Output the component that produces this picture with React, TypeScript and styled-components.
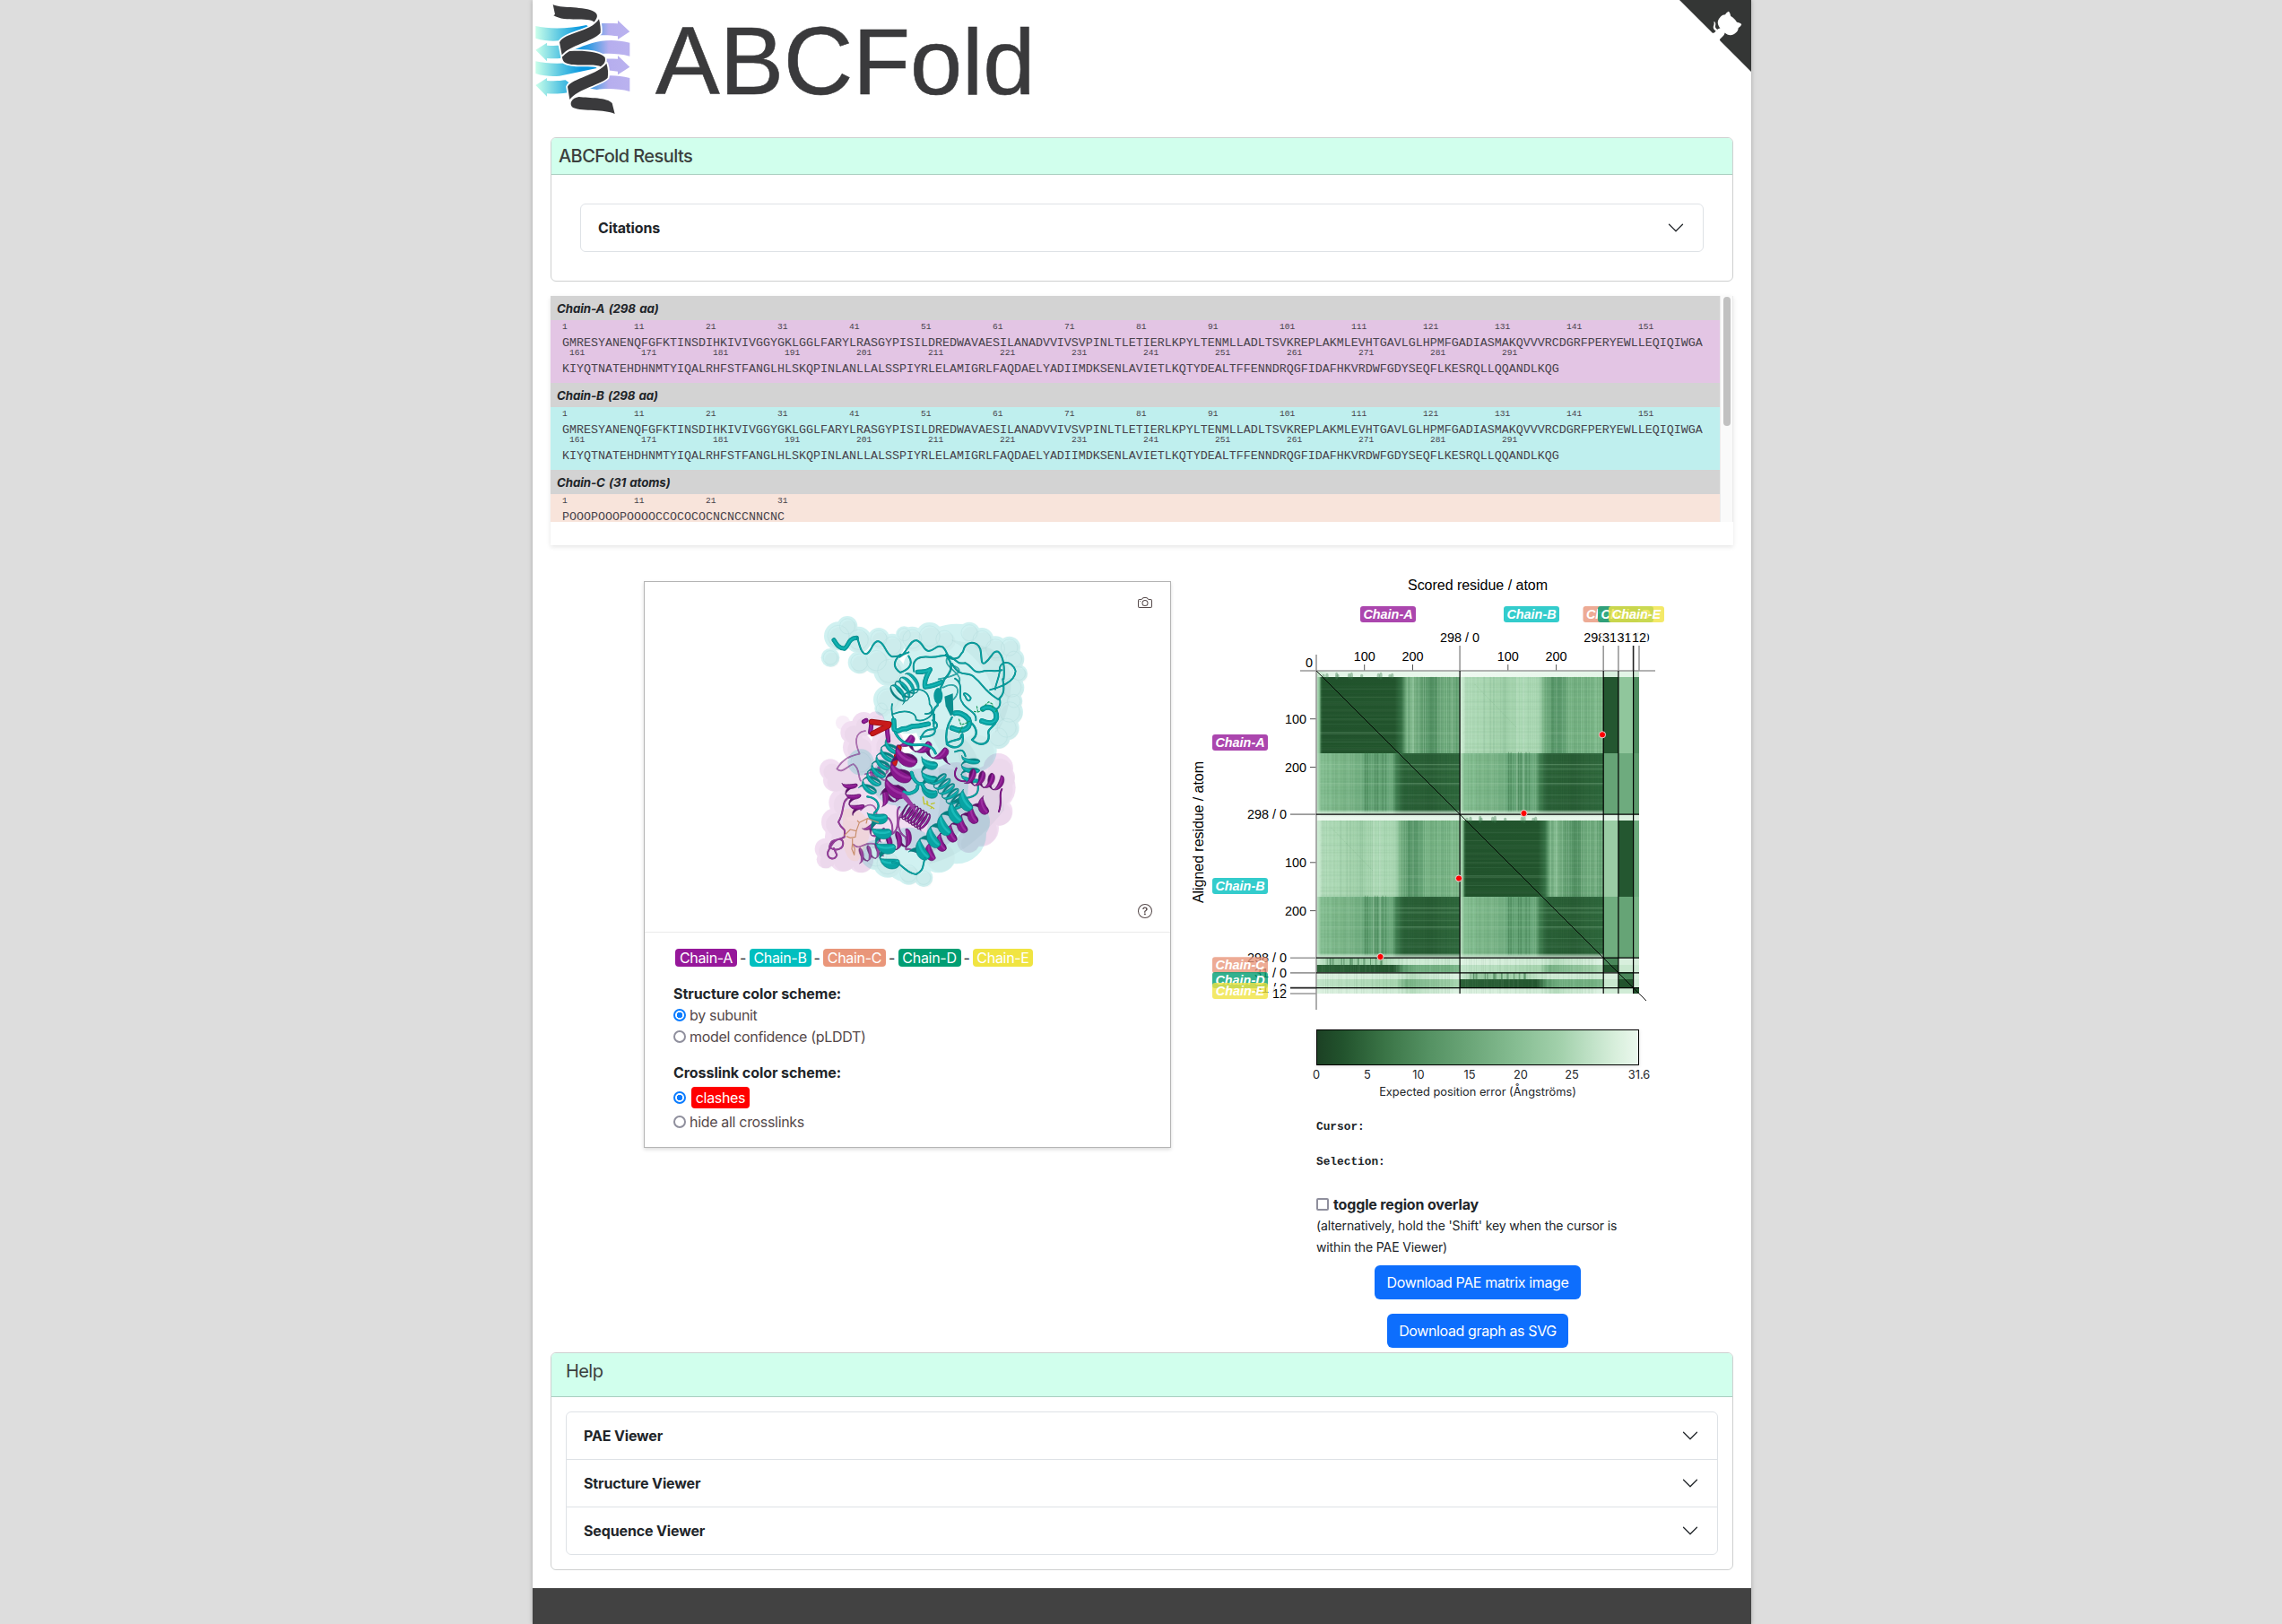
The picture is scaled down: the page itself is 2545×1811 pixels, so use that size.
import React from "react";
import styled, { createGlobalStyle } from "styled-components";
import { BsCamera, BsQuestionCircle, BsChevronDown } from "react-icons/bs";

const SANS = `Inter, "Liberation Sans", sans-serif`;
const ARIAL = `"Liberation Sans", Arial, sans-serif`;
const MONO = `"Liberation Mono", monospace`;

const Global = createGlobalStyle`
  *, *::before, *::after { box-sizing: border-box; }
  body { margin: 0; background: #ddd; color: #212529; font-family: ${SANS}; font-size: 16px; line-height: 24px; }
`;

/* ---------- page frame ---------- */

const Page = styled.main`
  position: relative;
  width: 1359px;
  height: 1811px;
  margin: 0 auto;
  left: 1px;
  background: #fff;
  box-shadow: 0 0 5px rgba(0, 0, 0, 0.25);
  display: flex;
  flex-direction: column;
  overflow: hidden;
`;
const Header = styled.header`
  height: 153px;
  display: flex;
  align-items: flex-start;
`;
const Wordmark = styled.h1`
  margin: 0 0 0 17px;
  font: 400 104.5px/137px ${ARIAL};
  color: #3a3a3c;
  display: flex;
  align-items: baseline;
  white-space: nowrap;
  -webkit-text-stroke: 0.6px #3a3a3c;
`;
const WordmarkLead = styled.span`
  font-size: 107.5px;
  letter-spacing: -0.3px;
`;
const Corner = styled.svg`
  position: absolute;
  top: 0;
  right: 0;
  width: 80px;
  height: 80px;
  fill: #343635;
  color: #fff;
`;
const Body = styled.div`
  padding: 0 20px;
  flex: 1;
  display: flex;
  flex-direction: column;
`;
const Footer = styled.footer`
  height: 40px;
  background: #424242;
`;

/* ---------- cards & accordions ---------- */

const Card = styled.section<{ $h: number }>`
  height: ${(p) => p.$h}px;
  flex: none;
  border: 1px solid #ced0d0;
  border-radius: 6px;
  background: #fff;
  overflow: hidden;
`;
const CardHeader = styled.h2<{ $h: number; $x: number; $weight: number }>`
  margin: 0;
  height: ${(p) => p.$h}px;
  padding: 8px ${(p) => p.$x}px;
  font-size: 20px;
  line-height: 24px;
  font-weight: ${(p) => p.$weight};
  letter-spacing: -0.58px;
  color: #3b3f3d;
  background: #d1ffed;
  border-bottom: 1px solid #a9cfc0;
`;
const Accordion = styled.div<{ $my: number; $mx: number }>`
  margin: ${(p) => p.$my}px ${(p) => p.$mx}px;
  border: 1px solid #dee2e6;
  border-radius: 6px;
`;
const AccordionItem = styled.button`
  all: unset;
  box-sizing: border-box;
  width: 100%;
  height: 52px;
  padding: 0 20px 0 19px;
  display: flex;
  align-items: center;
  justify-content: space-between;
  font: 650 16px/24px ${SANS};
  letter-spacing: -0.14px;
  color: #212529;
  & + & {
    height: 53px;
    border-top: 1px solid #dee2e6;
  }
  svg {
    width: 20px;
    height: 20px;
  }
`;

/* ---------- sequence panel ---------- */

const SequencePanel = styled.section`
  margin-top: 16px;
  height: 278px;
  flex: none;
  box-shadow: 0 2px 5px rgba(0, 0, 0, 0.1);
`;
const SequenceScroll = styled.div`
  height: 252px;
  display: flex;
  overflow: hidden;
`;
const SequenceList = styled.div`
  flex: 1;
  min-width: 0;
`;
const ScrollTrack = styled.div`
  width: 15px;
  background: #fafafa;
  border-left: 1px solid #ececec;
  border-right: 1px solid #ececec;
  padding: 1px 3px;
`;
const ScrollThumb = styled.div`
  width: 8px;
  height: 144px;
  border-radius: 4px;
  background: #c1c1c1;
`;
const ChainTitle = styled.h3`
  margin: 0;
  height: 27px;
  padding: 0 7px;
  background: #d3d3d3;
  font: italic 700 13.3px/29px ${SANS};
  letter-spacing: -0.1px;
  word-spacing: 1.2px;
`;
const ChainBody = styled.div<{ $bg: string }>`
  height: 70px;
  padding: 1px 0 0 13px;
  background: ${(p) => p.$bg};
  font-family: ${MONO};
  color: #48434b;
`;
const SeqLine = styled.div`
  height: 28.5px;
`;
const Ruler = styled.div<{ $shift: number }>`
  display: flex;
  padding-left: ${(p) => p.$shift}px;
  height: 12px;
  font-size: 9.6px;
  line-height: 14px;
  span {
    width: 80px;
  }
`;
const Letters = styled.div`
  font-size: 13.333px;
  line-height: 25px;
  white-space: pre;
`;

const ROW1 =
  "GMRESYANENQFGFKTINSDIHKIVIVGGYGKLGGLFARYLRASGYPISILDREDWAVAESILANADVVIVSVPINLTLETIERLKPYLTENMLLADLTSVKREPLAKMLEVHTGAVLGLHPMFGADIASMAKQVVVRCDGRFPERYEWLLEQIQIWGA";
const ROW2 =
  "KIYQTNATEHDHNMTYIQALRHFSTFANGLHLSKQPINLANLLALSSPIYRLELAMIGRLFAQDAELYADIIMDKSENLAVIETLKQTYDEALTFFENNDRQGFIDAFHKVRDWFGDYSEQFLKESRQLLQQANDLKQG";
const ticks = (from: number, n: number) => Array.from({ length: n }, (_, i) => from + 10 * i);

const chains = [
  { title: "Chain-A (298 aa)", bg: "#e3c5e4", rows: [ROW1, ROW2] },
  { title: "Chain-B (298 aa)", bg: "#bfefee", rows: [ROW1, ROW2] },
  { title: "Chain-C (31 atoms)", bg: "#f8e4db", rows: ["POOOPOOOPOOOOCCOCOCOCNCNCCNNCNC"] },
];

function Sequences() {
  return (
    <SequencePanel>
      <SequenceScroll>
        <SequenceList>
          {chains.map((c) => (
            <React.Fragment key={c.title}>
              <ChainTitle>{c.title}</ChainTitle>
              <ChainBody $bg={c.bg}>
                {c.rows.map((r, i) => (
                  <SeqLine key={i}>
                    <Ruler $shift={i ? 8 : 0}>
                      {ticks(i ? 161 : 1, i ? 14 : c.rows.length > 1 ? 16 : 4).map((n) => (
                        <span key={n}>{n}</span>
                      ))}
                    </Ruler>
                    <Letters>{r}</Letters>
                  </SeqLine>
                ))}
              </ChainBody>
            </React.Fragment>
          ))}
        </SequenceList>
        <ScrollTrack>
          <ScrollThumb />
        </ScrollTrack>
      </SequenceScroll>
    </SequencePanel>
  );
}

/* ---------- logo ---------- */

function Logo() {
  return (
    <svg width="120" height="132" viewBox="0 0 360 396">
      <defs>
        <linearGradient id="teal" gradientUnits="userSpaceOnUse" x1="10" x2="200" y1="0" y2="0">
          <stop offset="0" stopColor="#c9ffea" />
          <stop offset="0.45" stopColor="#54c4e2" />
          <stop offset="0.8" stopColor="#0a98e0" />
        </linearGradient>
        <linearGradient id="lilac" gradientUnits="userSpaceOnUse" x1="140" x2="325" y1="0" y2="0">
          <stop offset="0" stopColor="#0a98e0" />
          <stop offset="0.25" stopColor="#2f9be2" />
          <stop offset="0.62" stopColor="#b6aeee" />
          <stop offset="1" stopColor="#bab2ef" />
        </linearGradient>
      </defs>
      {[0, 118].map((dy) => (
        <g key={dy} transform={`translate(0 ${dy})`}>
          <path fill="url(#teal)" d="M10 87C55 98 125 96 180 84L215 110 90 136C70 138 40 138 10 128Z" />
          <path fill="url(#lilac)" d="M222 79C245 78 265 78 285 79V68L325 106 285 132V121C265 118 245 117 222 118Z" />
          <path fill="url(#teal)" d="M10 167 48 143V152C75 154 95 152 110 150L150 180C120 198 75 196 48 195V205Z" />
          <path fill="url(#lilac)" d="M135 168C200 140 250 124 325 143V188C285 177 240 178 215 182Z" />
        </g>
      ))}
      <g fill="#3a3a3c" stroke="#fff" strokeWidth="11" paintOrder="stroke" strokeLinejoin="round">
        <path d="M68 15C90 28 160 20 200 36C226 48 214 62 206 74C185 56 110 76 70 52L75 48Z" />
        <path d="M102 175C150 165 225 172 242 192C246 208 236 220 230 224C205 208 140 228 106 208C97 198 98 185 102 175Z" />
        <path d="M155 324C190 328 250 326 266 345L275 381C240 364 170 374 135 360C120 348 130 328 155 324Z" />
        <path d="M222 64C226 80 229 98 227 110C200 140 125 150 98 184L90 142C105 108 195 108 222 64Z" />
        <path d="M247 212C252 228 254 246 251 260C235 280 150 298 124 333L117 290C130 262 220 250 247 212Z" />
      </g>
    </svg>
  );
}

function GithubCorner() {
  return (
    <Corner viewBox="0 0 250 250">
      <path d="M0 0L115 115L130 115L142 142L250 250L250 0Z" />
      <path
        fill="currentColor"
        d="M128.3 109C113.8 99.7 119 89.6 119 89.6C122 82.7 120.5 78.6 120.5 78.6C119.2 72 123.4 76.3 123.4 76.3C127.3 80.9 125.5 87.3 125.5 87.3C122.9 97.6 130.6 101.9 134.4 103.2"
      />
      <path
        fill="currentColor"
        d="M115 115C114.9 115.1 118.7 116.5 119.8 115.4L133.7 101.6C136.9 99.2 139.9 98.4 142.2 98.6C133.8 88 127.5 74.4 143.8 58C148.5 53.4 154 51.2 159.7 51C160.3 49.4 163.2 43.6 171.4 40.1C171.4 40.1 176.1 42.5 178.8 56.2C183.1 58.6 187.2 61.8 190.9 65.4C194.5 69 197.7 73.2 200.1 77.6C213.8 80.2 216.3 84.9 216.3 84.9C212.7 93.1 206.9 96 205.4 96.6C205.1 102.4 203 107.8 198.3 112.5C181.9 128.9 168.3 122.5 157.7 114.1C157.9 116.9 156.7 120.9 152.7 124.9L141 136.5C139.8 137.7 141.6 141.9 141.8 141.8Z"
      />
    </Corner>
  );
}

/* ---------- molecule drawing ---------- */

type Tone = { back: string; mid: string; hi: string };
const CYAN: Tone = { back: "#077f80", mid: "#08a3a3", hi: "#22c4c3" };
const PURP: Tone = { back: "#5a1266", mid: "#86178c", hi: "#a63aab" };

function Helix(p: { a: [number, number]; b: [number, number]; r: number; n: number; w: number; t: Tone; d?: number; o?: number }) {
  const { a, b, r, n, w, t, d = 0.35, o = 1 } = p;
  const dx = b[0] - a[0];
  const dy = b[1] - a[1];
  const L = Math.hypot(dx, dy);
  const ux = dx / L;
  const uy = dy / L;
  const at = (s: number, off: number) => {
    const ph = 2 * Math.PI * n * s;
    const across = r * Math.cos(ph);
    const along = L * s + r * d * Math.sin(ph) + off;
    return `${(a[0] + ux * along - uy * across).toFixed(1)} ${(a[1] + uy * along + ux * across).toFixed(1)}`;
  };
  /* each half turn is a crescent: widest where it faces the viewer, thin at the rim */
  const ribbon = (k: number, width: number) => {
    const steps = Array.from({ length: 13 }, (_, i) => i / 12);
    const half = (u: number) => (width / 2) * (0.22 + 0.78 * Math.sin(Math.PI * u));
    const top = steps.map((u) => at((k + u) / (2 * n), -half(u)));
    const low = steps.map((u) => at((k + u) / (2 * n), half(u))).reverse();
    return "M" + top.concat(low).join("L") + "Z";
  };
  const core = (k: number) => "M" + Array.from({ length: 7 }, (_, i) => at((k + 0.2 + i * 0.1) / (2 * n), -w * 0.12)).join("L");
  const halves = Array.from({ length: Math.round(n * 2) }, (_, k) => k);
  return (
    <g strokeLinecap="round" strokeLinejoin="round" opacity={o}>
      {halves.filter((k) => k % 2).map((k) => (
        <path key={k} d={ribbon(k, w * 0.6)} fill={t.back} stroke={t.back} strokeWidth="2" />
      ))}
      {halves.filter((k) => k % 2 === 0).map((k) => (
        <g key={k}>
          <path d={ribbon(k, w)} fill={t.mid} stroke={t.back} strokeWidth="2" />
          <path d={core(k)} fill="none" stroke={t.hi} strokeWidth={w * 0.22} opacity="0.7" />
        </g>
      ))}
    </g>
  );
}

function Tube({ d, t, w = 6, o = 1 }: { d: string; t: Tone; w?: number; o?: number }) {
  return (
    <g fill="none" strokeLinecap="round" strokeLinejoin="round" opacity={o}>
      <path d={d} stroke={t.back} strokeWidth={w} />
      <path d={d} stroke={t.mid} strokeWidth={w - 2} />
      {w > 8 && <path d={d} stroke={t.hi} strokeWidth={w * 0.25} opacity="0.6" />}
    </g>
  );
}

const cyanSurface = [
  [195, 85, 34], [165, 118, 48], [138, 190, 31], [232, 130, 44], [235, 206, 38], [300, 126, 36], [292, 200, 45], [345, 150, 40],
  [335, 235, 52], [385, 113, 28], [412, 128, 42], [470, 118, 46], [520, 128, 38], [603, 107, 36], [645, 130, 40], [690, 160, 42],
  [737, 156, 37], [752, 195, 35], [768, 243, 30], [745, 290, 42], [752, 335, 29], [738, 372, 45], [728, 425, 42], [700, 455, 40],
  [560, 262, 185], [400, 350, 95], [330, 330, 48], [560, 400, 140], [310, 360, 24], [240, 540, 44], [560, 780, 100], [400, 850, 92],
  [330, 878, 48], [290, 850, 50], [400, 912, 38], [450, 926, 31], [500, 850, 60], [610, 740, 62], [360, 600, 85], [470, 620, 130], [620, 500, 75],
];
const purpleSurface = [
  [250, 412, 40], [290, 400, 30], [210, 440, 38], [230, 490, 50], [138, 565, 36], [152, 600, 38], [200, 590, 58],
  [185, 675, 52], [155, 740, 47], [122, 830, 36], [122, 865, 30], [180, 860, 46], [240, 868, 42], [700, 560, 50], [720, 590, 36],
  [680, 625, 78], [700, 705, 48], [640, 760, 62], [600, 805, 38], [300, 700, 130], [450, 700, 140], [560, 650, 110], [300, 580, 80],
  [330, 480, 55], [200, 790, 80],
];

function Molecule() {
  return (
    <svg width="290" height="330" viewBox="0 0 870 990">
      <g opacity="0.14" fill="#a0189f">
        {purpleSurface.map(([x, y, r], i) => <circle key={i} cx={x} cy={y} r={r} />)}
        <circle cx="180" cy="408" r="24" opacity="0.5" />
      </g>
      <g opacity="0.18" fill="#00b8b4">
        {cyanSurface.map(([x, y, r], i) => <circle key={i} cx={x} cy={y} r={r} />)}
      </g>
      <g fill="#666" opacity="0.03">
        {purpleSurface.concat(cyanSurface).filter((c) => c[2] < 90).map(([x, y, r], i) => (
          <circle key={i} cx={x + 6} cy={y + 8} r={r * 0.8} />
        ))}
      </g>
      <g fill="none" stroke="#2f8f93" strokeWidth="2" opacity="0.1">
        {cyanSurface.filter((c) => c[2] < 60).map(([x, y, r], i) => (
          <circle key={i} cx={x} cy={y} r={r * 0.75} />
        ))}
      </g>
      <g fill="#5c8a94" opacity="0.07">
        <path d="M540 130C640 150 720 150 740 240C750 330 720 420 690 440C700 330 690 220 540 130Z" />
        <path d="M500 560C620 560 720 600 720 700C640 800 560 860 470 880C480 780 520 700 500 560Z" />
        <path d="M470 430C560 420 620 470 640 560C580 600 520 560 470 430Z" />
      </g>
      <path d="M180 700Q230 680 260 730T230 870Q190 880 180 800Z" fill="#f6c9a8" opacity="0.25" />

      {/* chain A, rear */}
      <g>
        <Tube t={PURP} w={5} o={0.55} d="M255 435C215 440 222 480 236 512C200 520 180 530 160 562C178 580 195 552 215 546C238 560 230 590 240 602" />
        <Tube t={PURP} w={6} o={0.8} d="M205 655C170 670 190 700 165 740C180 775 190 750 185 790C165 805 140 790 135 825C160 840 185 830 180 805C172 790 150 795 130 840C125 865 155 870 160 850L150 828" />
        <Tube t={PURP} w={6} o={0.75} d="M300 740C330 700 350 740 345 780C380 760 350 700 370 690M385 700C350 740 370 780 390 790C400 830 380 835 400 830C430 840 440 850 455 850" />
        <Tube t={PURP} w={5} o={0.6} d="M215 815C240 840 250 800 290 815C320 790 300 760 270 765M240 700C280 660 300 700 290 720M255 580C300 560 300 600 320 600" />
        <Helix t={PURP} a={[200, 605]} b={[235, 710]} r={23} n={3} w={15} />
        <Helix t={PURP} a={[265, 585]} b={[330, 560]} r={16} n={2.5} w={9} o={0.7} />
        <Helix t={PURP} a={[230, 855]} b={[310, 830]} r={24} n={3} w={9} o={0.8} />
        <Helix t={PURP} a={[320, 815]} b={[400, 790]} r={28} n={2.5} w={16} />
        <Helix t={PURP} a={[260, 745]} b={[320, 790]} r={22} n={2} w={12} o={0.85} />
        <Helix t={PURP} a={[305, 665]} b={[370, 640]} r={24} n={1.5} w={20} />
        <Helix t={PURP} a={[375, 462]} b={[545, 525]} r={23} n={3} w={26} d={0.6} />
        <Tube t={PURP} w={15} d="M250 404L258 400M275 415L272 440M328 430L332 468" />
      </g>

      {/* chain B, upper domain */}
      <Tube t={CYAN} w={15} d="M150 131C158 142 162 158 186 160C200 150 198 125 226 124" />
      <Tube t={CYAN} w={6} d="M228 124C236 145 240 178 258 178C278 172 276 136 298 135C322 140 322 178 345 187C370 188 385 178 400 172" />
      <Tube t={CYAN} w={6} d="M370 188C395 175 402 132 426 132C450 140 448 166 467 168C490 165 492 145 515 155C532 170 526 190 545 194C575 195 570 180 582 170C590 132 630 132 640 162C646 190 640 215 655 208C680 190 680 165 700 170C718 185 722 225 718 262" />
      <Tube t={CYAN} w={6} d="M372 180C345 205 350 225 372 240C395 232 420 215 400 185" />
      <Tube t={CYAN} w={6} d="M418 236C408 190 440 185 470 188C510 190 512 175 540 187C565 202 560 212 590 208C616 220 612 240 640 238C670 228 680 240 712 232" />
      <Tube t={CYAN} w={5.5} d="M672 298C700 290 755 275 758 235C745 195 700 200 705 235C700 268 690 280 690 296" />
      <Tube t={CYAN} w={16} d="M430 238Q460 238 472 230Q450 268 455 288Q485 285 510 272" />
      <Tube t={CYAN} w={7} d="M525 180C555 220 540 240 520 262C508 290 500 300 497 350C470 370 490 390 484 410" />
      <Tube t={CYAN} w={6} d="M545 210C575 265 600 230 622 258C650 280 650 300 700 330C725 310 718 285 715 262" />
      <Tube t={CYAN} w={5.5} d="M555 260C590 280 560 320 580 340C590 365 630 370 625 400M590 320C575 305 595 305 608 325C605 340 595 335 590 320M705 330C710 350 700 360 690 365" />
      <Tube t={CYAN} w={5} o={0.8} d="M500 262C570 250 590 230 545 215M515 290C560 265 580 300 550 330M530 190C510 220 580 240 570 270" />
      <Helix t={CYAN} a={[358, 318]} b={[412, 272]} r={36} n={3.5} w={10} d={0.5} />
      <Tube t={CYAN} w={5} d="M345 345C340 370 345 385 352 402M350 378C390 362 425 372 425 398C450 408 480 385 478 372M380 320C405 290 470 280 470 345C490 370 470 380 455 378" />
      <ellipse cx="499" cy="318" rx="15" ry="27" fill="#08989a" />
      <path d="M520 320L548 310 550 380 540 385 524 352Z" fill="#0a8e8f" />
      <Tube t={CYAN} w={18} d="M545 425C590 445 612 420 600 395C585 378 565 372 555 376" />
      <Tube t={CYAN} w={18} d="M645 402C690 420 700 395 690 370C680 355 660 352 648 362" />
      <Tube t={CYAN} w={7} d="M545 390C520 430 525 465 528 480C555 500 590 490 580 445M530 475C560 460 575 470 576 450M612 410C630 430 632 450 612 465C640 490 670 480 668 450C662 430 675 430 690 410" />
      <Tube t={CYAN} w={17} d="M350 400L352 430C370 445 365 425 392 428L412 420 436 418 466 412" />
      <Tube t={CYAN} w={6} d="M480 400C505 410 495 430 480 430C450 430 445 450 440 462M486 380L484 420C500 450 470 455 440 455" />
      <Tube t={CYAN} w={9} d="M355 440C370 470 390 480 420 482C450 480 480 480 490 510" />

      <g stroke="#9c0d0f" strokeLinecap="round">
        <path d="M276 405L334 412M280 444L332 418" strokeWidth="19" />
        <path d="M276 405L334 412M280 444L332 418" strokeWidth="14" stroke="#c81a1a" />
        <path d="M368 492L352 545" strokeWidth="18" />
        <path d="M368 492L352 545" strokeWidth="13" stroke="#d01c1c" />
      </g>

      {/* helix bundle */}
      <Helix t={CYAN} a={[350, 478]} b={[258, 640]} r={29} n={6} w={14} d={0.5} />
      <Helix t={PURP} a={[398, 500]} b={[345, 660]} r={40} n={3} w={36} d={0.5} />
      <Helix t={CYAN} a={[470, 525]} b={[470, 645]} r={26} n={2.5} w={27} d={0.5} />
      <Tube t={CYAN} w={12} d="M410 575C415 600 430 615 445 612C455 640 470 645 490 640M385 640C400 650 430 640 430 620" />
      <Helix t={CYAN} a={[495, 590]} b={[578, 690]} r={29} n={6} w={10} d={0.4} />
      <Helix t={CYAN} a={[608, 520]} b={[606, 598]} r={30} n={2.5} w={14} />
      <Tube t={CYAN} w={6} d="M555 505C580 495 585 500 590 520M628 600C640 640 630 655 590 660" />
      <Helix t={PURP} a={[595, 585]} b={[705, 610]} r={26} n={3.5} w={16} d={0.45} />
      <Tube t={PURP} w={6} d="M560 560C545 590 565 605 590 604M712 630C700 650 715 670 702 705" />
      <Helix t={PURP} a={[665, 675]} b={[470, 845]} r={26} n={5.5} w={28} d={0.5} />
      <Helix t={CYAN} a={[605, 655]} b={[425, 860]} r={32} n={5} w={34} d={0.45} />
      <Helix t={PURP} a={[388, 698]} b={[458, 743]} r={31} n={7} w={7} d={0.35} />
      <Helix t={CYAN} a={[292, 705]} b={[340, 880]} r={30} n={3.5} w={34} d={0.45} />
      <Tube t={CYAN} w={7} d="M262 655C300 660 310 690 285 710" />
      <Tube t={CYAN} w={6} d="M345 875C375 870 385 910 425 915C455 900 445 885 455 862" />
      <path d="M380 640C400 650 415 680 430 712L415 700C400 680 388 670 376 655Z" fill="#9b3ba3" />

      {/* ligands */}
      <g fill="none" strokeLinejoin="round">
        <path d="M448 655L452 680 466 676M462 668V682L478 690 486 696M474 680L488 676M478 690L474 696" stroke="#bdc32a" strokeWidth="4" />
        <path d="M185 785L205 765 225 770 222 790 205 793 192 788M225 770L235 742 262 728 280 735 300 742M235 742L228 735M262 728L258 745M212 792V812L220 830 218 850 210 830 212 812" stroke="#c98f6c" strokeWidth="3.5" />
        <path d="M568 395L575 415 590 410 605 402M580 420L568 445M618 370L632 372 650 365M655 350L668 338 680 345 682 360M690 372L698 362M628 352L632 372" stroke="#159a5c" strokeWidth="3.5" strokeDasharray="9 3" />
      </g>
    </svg>
  );
}

/* ---------- structure viewer ---------- */

const ViewerRow = styled.div`
  height: 900px;
  flex: none;
  display: flex;
  align-items: flex-start;
`;
const StructureBox = styled.section`
  margin: 40px 0 0 104px;
  width: 588px;
  height: 632px;
  border: 1px solid #b4b4b4;
  box-shadow: 0 2px 4px rgba(0, 0, 0, 0.14);
`;
const Stage = styled.div`
  height: 391px;
  border-bottom: 1px solid #ebebeb;
  padding: 21px 20px 0 161px;
  display: flex;
  justify-content: space-between;
`;
const StageTools = styled.div`
  height: 354px;
  display: flex;
  flex-direction: column;
  justify-content: space-between;
  color: #55494a;
  svg {
    display: block;
    width: 16px;
    height: 16px;
  }
  svg:first-child {
    margin-top: -6px;
  }
`;
const Controls = styled.div`
  padding: 13px 32px 0;
`;
const ChainBadges = styled.div`
  height: 29px;
  padding-left: 2px;
  display: flex;
  align-items: center;
  font-size: 16px;
`;
const ChainBadge = styled.span<{ $bg: string; $w: number }>`
  width: ${(p) => p.$w}px;
  height: 20px;
  border-radius: 4px;
  background: ${(p) => p.$bg};
  color: #fff;
  line-height: 21px;
  text-align: center;
  letter-spacing: -0.3px;
`;
const Dash = styled.span`
  width: 13.5px;
  text-align: center;
`;
const SchemeTitle = styled.h4<{ $mt: number }>`
  margin: ${(p) => p.$mt}px 0 0;
  font: 700 16px/24px ${SANS};
  letter-spacing: -0.06px;
`;
const Option = styled.label<{ $h?: number }>`
  height: ${(p) => p.$h ?? 24}px;
  display: flex;
  align-items: center;
  gap: 4px;
  color: #55494a;
  letter-spacing: -0.32px;
`;
const Radio = styled.input.attrs({ type: "radio" })`
  appearance: none;
  flex: none;
  width: 14px;
  height: 14px;
  margin: 0;
  border: 2px solid #8f8f9d;
  border-radius: 50%;
  background: #fff;
  &:checked {
    border-color: #0a7cff;
    background: radial-gradient(circle, #0a7cff 0 3px, #fff 3.5px);
  }
`;
const ClashBadge = styled.span`
  margin-left: 2px;
  width: 65px;
  height: 24px;
  border-radius: 4px;
  background: #f00;
  color: #fff;
  text-align: center;
`;

const badges: [string, string, number][] = [
  ["Chain-A", "#96189a", 69],
  ["Chain-B", "#00bfbf", 69],
  ["Chain-C", "#e9967a", 70],
  ["Chain-D", "#009e73", 70],
  ["Chain-E", "#f0e442", 67],
];

function StructureViewer() {
  return (
    <StructureBox>
      <Stage>
        <Molecule />
        <StageTools>
          <BsCamera />
          <BsQuestionCircle />
        </StageTools>
      </Stage>
      <Controls>
        <ChainBadges>
          {badges.map(([name, bg, w], i) => (
            <React.Fragment key={name}>
              {i > 0 && <Dash>-</Dash>}
              <ChainBadge $bg={bg} $w={w}>{name}</ChainBadge>
            </React.Fragment>
          ))}
        </ChainBadges>
        <SchemeTitle $mt={14}>Structure color scheme:</SchemeTitle>
        <Option><Radio name="structure" defaultChecked />by subunit</Option>
        <Option><Radio name="structure" />model confidence (pLDDT)</Option>
        <SchemeTitle $mt={16}>Crosslink color scheme:</SchemeTitle>
        <Option $h={31}><Radio name="crosslink" defaultChecked /><ClashBadge>clashes</ClashBadge></Option>
        <Option><Radio name="crosslink" />hide all crosslinks</Option>
      </Controls>
    </StructureBox>
  );
}

/* ---------- PAE heat map ---------- */

type Stop = [number, string];
const lowDomain: Stop[] = [[0, "#c4e5cb"], [10, "#8cc398"], [17, "#2c6138"], [22, "#22532d"], [262, "#23552e"], [285, "#356f44"], [302, "#78b285"], [325, "#86bd92"], [350, "#6faa7d"], [378, "#579567"], [398, "#5b996b"], [425, "#7bb588"], [480, "#68a577"]];
const farDomain: Stop[] = [[0, "#d3eed9"], [25, "#b4debc"], [100, "#a8d6b1"], [150, "#9fd0a9"], [200, "#aedbb7"], [262, "#acd9b5"], [280, "#7cb689"], [310, "#5a986b"], [335, "#5f9d70"], [365, "#78b486"], [480, "#80bb8d"]];
const crossDomain: Stop[] = [[0, "#c4e5cb"], [15, "#86bf93"], [150, "#74b083"], [165, "#63a274"], [255, "#6eab7e"], [268, "#417e51"], [290, "#2a6037"], [380, "#285c34"], [480, "#2e673c"]];
const paleA: Stop[] = [[0, "#bfe2c6"], [40, "#e2f4e6"], [480, "#e9f7ec"]];
const paleFar: Stop[] = [[0, "#eff9f1"], [480, "#e4f5e8"]];
const ligDark: Stop[] = [[0, "#2c6138"], [260, "#245730"], [290, "#5a986a"], [330, "#70ad7f"], [480, "#78b486"]];
const ligStreak: Stop[] = [[0, "#cfebd5"], [60, "#9ccda6"], [200, "#a6d5af"], [300, "#d0ecd6"], [480, "#cdead3"]];
const ligFar: Stop[] = [[0, "#c2e5ca"], [270, "#a6d4ae"], [300, "#76b184"], [360, "#86bd92"], [480, "#a9d6b1"]];
const ligPale: Stop[] = [[0, "#def2e2"], [280, "#cfebd5"], [320, "#b5dcbd"], [370, "#c8e7ce"], [480, "#dff3e4"]];

const bands: [number, number, Stop[], Stop[], string, string, string][] = [
  [0, 20, paleA, paleFar, "#d9f0de", "#e4f5e8", "#cfead5"],
  [20, 276, lowDomain, farDomain, "#245730", "#90c69c", "#4e8c5f"],
  [276, 480, crossDomain, crossDomain, "#66a476", "#6eab7e", "#5c9a6c"],
  [480, 500, paleFar, paleA, "#e4f5e8", "#d9f0de", "#dcf1e1"],
  [500, 757, farDomain, lowDomain, "#9acca4", "#245730", "#6dab7d"],
  [757, 960, crossDomain, crossDomain, "#70ad7f", "#66a476", "#78b486"],
  [960, 983, ligStreak, ligPale, "#4a875a", "#d8efdd", "#d8efdd"],
  [983, 1009, ligDark, ligFar, "#22532d", "#c8e7ce", "#d0ecd6"],
  [1009, 1031, ligPale, ligStreak, "#d8efdd", "#4a875a", "#d8efdd"],
  [1031, 1060, ligFar, ligDark, "#c8e7ce", "#22532d", "#d0ecd6"],
  [1060, 1080, ligPale, ligPale, "#d0ecd6", "#d0ecd6", "#1f4f2a"],
];

const rnd = (n: number) => {
  const v = Math.sin(n * 127.1 + 31.7) * 43758.5453;
  return v - Math.floor(v);
};
const fine = Array.from({ length: 156 }, (_, i) => 12 + i * 3);
const rowLines = [
  [62, 0.12], [88, 0.16], [104, 0.12], [129, 0.12], [161, 0.13], [178, 0.1], [206, 0.34], [210, 0.24], [238, 0.12], [257, 0.1],
  [314, 0.5], [327, 0.36], [332, 0.2], [356, 0.24], [377, 0.5], [380, 0.18], [415, 0.2], [444, 0.12], [470, 0.3], [474, 0.5],
];
const darkCols = [[162, 3], [170, 3], [195, 3], [203, 3], [220, 4], [232, 2]];

function ColumnStripes({ x, y, h, lo, hi, k, seed = 0 }: { x: number; y: number; h: number; lo: number; hi: number; k: number; seed?: number }) {
  return (
    <>
      {fine.filter((p) => p >= lo && p < hi).map((p) => {
        const v = rnd(p + seed) - 0.5;
        return <rect key={p} x={x + p} y={y} width="3" height={h} fill={v > 0 ? "#d8f2de" : "#1d5a2e"} opacity={Math.abs(v) * k} />;
      })}
    </>
  );
}

function Heatmap() {
  return (
    <g transform="translate(1468 748) scale(0.333333)">
      <defs>
        {bands.map((b, i) =>
          [b[2], b[3]].map((stops, j) => (
            <linearGradient key={`${i}-${j}`} id={`band${i}-${j}`} gradientUnits="userSpaceOnUse" x1={j * 480} x2={j * 480 + 480} y1="0" y2="0">
              {stops.map(([o, c]) => <stop key={o} offset={o / 480} stopColor={c} />)}
            </linearGradient>
          )),
        )}
        <linearGradient id="fadeDown" x1="0" x2="0" y1="0" y2="1">
          <stop offset="0" stopColor="#e4f5e8" stopOpacity="0" />
          <stop offset="1" stopColor="#e4f5e8" stopOpacity="0.85" />
        </linearGradient>
      </defs>
      {bands.map(([y0, y1, , , c, d, e], i) => (
        <g key={i} shapeRendering="crispEdges">
          <rect x="0" y={y0} width="480" height={y1 - y0} fill={`url(#band${i}-0)`} />
          <rect x="480" y={y0} width="480" height={y1 - y0} fill={`url(#band${i}-1)`} />
          <rect x="960" y={y0} width="50" height={y1 - y0} fill={c} />
          <rect x="1010" y={y0} width="50" height={y1 - y0} fill={d} />
          <rect x="1060" y={y0} width="20" height={y1 - y0} fill={e} />
        </g>
      ))}
      {[[0, 0], [480, 480], [480, 0], [0, 480]].map(([x, y], q) => (
        <g key={q}>
          {q < 2 ? (
            <ColumnStripes x={x} y={y + 20} h={256} lo={300} hi={480} k={0.32} />
          ) : (
            <>
              <ColumnStripes x={x} y={y + 20} h={256} lo={12} hi={270} k={0.14} seed={3} />
              <ColumnStripes x={x} y={y + 20} h={256} lo={270} hi={480} k={0.24} />
            </>
          )}
          <ColumnStripes x={x} y={y + 276} h={204} lo={12} hi={266} k={0.15} seed={7} />
          <ColumnStripes x={x} y={y + 276} h={204} lo={266} hi={480} k={0.04} seed={7} />
          {darkCols.map(([p, w]) => (
            <rect key={p} x={x + p} y={y + 272} width={w} height="200" fill="#2c6a3c" opacity="0.4" />
          ))}
          <rect x={x + 190} y={y + 20} width="3" height="450" fill="#e4f5e8" opacity={q < 2 ? 0 : 0.3} />
          <rect x={x + 212} y={y + 20} width="3" height="450" fill="#e4f5e8" opacity={q < 2 ? 0 : 0.35} />
          {fine.map((p) => {
            const v = rnd(p + 50) - 0.5;
            return <rect key={p} x={x + 14} y={y + p + 8} width="466" height="3" fill={v > 0 ? "#d8f2de" : "#1d5a2e"} opacity={Math.abs(v) * 0.1} />;
          })}
          {rowLines.map(([p, o]) => (
            <rect key={p} x={x + 10} y={y + p - 1} width="470" height="2.6" fill="#a9d8b2" opacity={o * 0.8} />
          ))}
          <rect x={x} y={y + 464} width="480" height="16" fill="url(#fadeDown)" />
          {q < 2 && [24, 36, 68, 72, 110, 118, 152, 208, 216, 246, 254].map((p, i) => (
            <ellipse key={p} cx={x + p} cy={y + 17} rx="5" ry={6 + (i % 3) * 3} fill="#3f7f50" opacity="0.4" />
          ))}
        </g>
      ))}
      {[[0, 960], [480, 1009]].map(([x, y]) => (
        <g key={x}>
          {[35, 44, 52, 83, 90, 112, 120, 138, 157, 180, 197, 214].map((p, i) => (
            <rect key={p} x={x + p} y={y + 2} width={3 + (i % 3) * 2} height="22" fill="#2c6a3c" opacity={0.4 + 0.2 * (i % 2)} />
          ))}
        </g>
      ))}
      {[0, 480].map((x) => (
        <ColumnStripes key={x} x={x} y={960} h={120} lo={12} hi={480} k={0.15} seed={11} />
      ))}
      <path d="M530 45L670 190M50 525L190 670" stroke="#4c8a5c" strokeWidth="1.5" strokeDasharray="4 3" opacity="0.3" />
    </g>
  );
}

const chartLabels = [
  { t: "Chain-A", c: "#96189a", x: 1548, y: 828 },
  { t: "Chain-B", c: "#00bfbf", x: 1708, y: 988 },
  { t: "Chain-C", c: "#e9967a", x: 1796.5, y: 1076.3 },
  { t: "Chain-D", c: "#009e73", x: 1813, y: 1093 },
  { t: "Chain-E", c: "#f0e442", x: 1825, y: 1105 },
];
const edges = [160.1, 320.2, 336.9, 353.6, 360];
const edgeText = ["298 / 0", "298 / 0", "31 / 0", "31 / 0", "12"];
const edgeWidth = [44, 44, 36, 36, 16];

function PaeChart() {
  return (
    <svg width="530" height="510" viewBox="1330 630 530 510" fontFamily='"Liberation Sans", Arial, sans-serif'>
      <text x="1648" y="658" fontSize="16" textAnchor="middle" textLength="156">Scored residue / atom</text>
      <text transform="translate(1341.5 928) rotate(-90)" fontSize="16" textAnchor="middle" textLength="158">Aligned residue / atom</text>
      <Heatmap />
      <g fontSize="14.4">
        {[53.7, 107.5, 213.8, 267.6].map((v, i) => (
          <g key={v}>
            <text x={1468 + v} y="736.5" textAnchor="middle">{i % 2 ? 200 : 100}</text>
            <text x="1457" y={748 + v + 5} textAnchor="end">{i % 2 ? 200 : 100}</text>
            <path d={`M${1468 + v} 741V748M1461 ${748 + v}H1468`} stroke="#555" />
          </g>
        ))}
        <text x="1464" y="743.5" textAnchor="end">0</text>
        {edges.map((v, i) => (
          <g key={i}>
            <rect x={1466.5 + v - edgeWidth[i] / 2} y="702" width={edgeWidth[i] + 3} height="17" fill="#fff" opacity="0.85" />
            <text x={1468 + v} y="715.7" textAnchor="middle">{edgeText[i]}</text>
            <rect x={1434 - edgeWidth[i]} y={740 + v} width={edgeWidth[i] + 2} height="16" fill="#fff" opacity="0.85" />
            <text x="1435" y={748 + v + 5} textAnchor="end">{edgeText[i]}</text>
          </g>
        ))}
      </g>
      <g stroke="#999" strokeWidth="1.6">
        <path d="M1450 748H1846M1468 730V1126" />
        {edges.map((v, i) => <path key={i} d={`M${1468 + v} 720V748M1439 ${748 + v}H1468`} stroke={i === 3 ? "#222" : "#999"} />)}
      </g>
      <g stroke="#000" strokeWidth="1.2">
        {edges.slice(0, 4).map((v) => <path key={v} d={`M${1468 + v} 748V1108M1468 ${748 + v}H1828`} />)}
        <path d="M1468 748L1836 1116" strokeWidth="0.9" />
      </g>
      {[[1787, 819.3], [1699.5, 907], [1627, 979.5], [1539.5, 1067]].map(([x, y]) => (
        <circle key={x} cx={x} cy={y} r="3.6" fill="#f00" stroke="#e5d5d5" />
      ))}
      <g fontSize="14.4" fontWeight="700" fontStyle="italic">
        {chartLabels.map((l) => (
          <g key={l.t}>
            <rect x={l.x - 31} y="676" width="62" height="18" rx="3" fill={l.c} opacity="0.8" />
            <text x={l.x} y="689.8" fill="#fff" textAnchor="middle">{l.t}</text>
            <rect x="1352" y={l.y - 9} width="62" height="18" rx="3" fill={l.c} opacity="0.8" />
            <text x="1383" y={l.y + 5} fill="#fff" textAnchor="middle">{l.t}</text>
          </g>
        ))}
      </g>
    </svg>
  );
}

const PaeColumn = styled.section`
  margin: 22px 0 0 24px;
  width: 530px;
  display: flex;
  flex-direction: column;
  svg {
    display: block;
  }
`;
const PaeDetails = styled.div`
  margin: 8px 0 0 138px;
  width: 360px;
  display: flex;
  flex-direction: column;
`;
const ColorBar = styled.div`
  height: 40px;
  border: 1px solid #000;
  background: linear-gradient(90deg, #1c4124 0%, #22532d 8%, #3a7446 21%, #559263 35%, #6aa577 47%, #86bd92 62%, #a3d1ac 76%, #bfe1c6 85%, #d8efdc 93%, #eaf7ed 100%);
  box-shadow: 0 1px 4px rgba(0, 0, 0, 0.12);
`;
const Scale = styled.div`
  height: 20px;
  display: flex;
  font-size: 12.8px;
  line-height: 22px;
  margin-left: -28.5px;
  span {
    width: 57px;
    text-align: center;
    flex: none;
  }
  span:last-child {
    margin-left: 18px;
  }
`;
const ScaleCaption = styled.div`
  height: 20px;
  font-size: 12.8px;
  line-height: 20px;
  text-align: center;
`;
const Readouts = styled.div`
  padding-top: 19px;
`;
const Readout = styled.div`
  height: 39px;
  font: 700 12.8px/20px ${MONO};
`;
const OverlayToggle = styled.label`
  margin-top: 6px;
  height: 24px;
  display: flex;
  align-items: center;
  gap: 5px;
  font-weight: 700;
  letter-spacing: -0.15px;
`;
const Checkbox = styled.input.attrs({ type: "checkbox" })`
  appearance: none;
  width: 14px;
  height: 14px;
  margin: 0;
  border: 2px solid #8f8f9d;
  border-radius: 2px;
  background: #fff;
`;
const Hint = styled.p`
  margin: 0;
  font-size: 14px;
  line-height: 24px;
  letter-spacing: -0.13px;
  white-space: nowrap;
`;
const Buttons = styled.div`
  margin-top: 8px;
  display: flex;
  flex-direction: column;
  align-items: center;
  gap: 16px;
`;
const PrimaryButton = styled.button<{ $w: number }>`
  width: ${(p) => p.$w}px;
  height: 38px;
  padding: 0;
  border: 0;
  border-radius: 6px;
  background: #0d6efd;
  color: #fff;
  font: 400 16px/24px ${SANS};
  letter-spacing: -0.37px;
`;

export default function App() {
  return (
    <>
      <Global />
      <Page>
        <Header>
          <Logo />
          <Wordmark>
            <WordmarkLead>ABC</WordmarkLead>Fold
          </Wordmark>
        </Header>
        <GithubCorner />
        <Body>
          <Card $h={161}>
            <CardHeader $h={41} $x={8} $weight={500}>ABCFold Results</CardHeader>
            <Accordion $my={32} $mx={32}>
              <AccordionItem>Citations<BsChevronDown /></AccordionItem>
            </Accordion>
          </Card>
          <Sequences />
          <ViewerRow>
            <StructureViewer />
            <PaeColumn>
              <PaeChart />
              <PaeDetails>
                <ColorBar />
                <Scale>
                  {["0", "5", "10", "15", "20", "25", "31.6"].map((n) => <span key={n}>{n}</span>)}
                </Scale>
                <ScaleCaption>Expected position error (Ångströms)</ScaleCaption>
                <Readouts>
                  <Readout>Cursor:</Readout>
                  <Readout>Selection:</Readout>
                </Readouts>
                <OverlayToggle><Checkbox />toggle region overlay</OverlayToggle>
                <Hint>(alternatively, hold the 'Shift' key when the cursor is<br />within the PAE Viewer)</Hint>
                <Buttons>
                  <PrimaryButton $w={230}>Download PAE matrix image</PrimaryButton>
                  <PrimaryButton $w={202}>Download graph as SVG</PrimaryButton>
                </Buttons>
              </PaeDetails>
            </PaeColumn>
          </ViewerRow>
          <Card $h={243}>
            <CardHeader $h={49} $x={16} $weight={400}>Help</CardHeader>
            <Accordion $my={16} $mx={16}>
              <AccordionItem>PAE Viewer<BsChevronDown /></AccordionItem>
              <AccordionItem>Structure Viewer<BsChevronDown /></AccordionItem>
              <AccordionItem>Sequence Viewer<BsChevronDown /></AccordionItem>
            </Accordion>
          </Card>
        </Body>
        <Footer />
      </Page>
    </>
  );
}
